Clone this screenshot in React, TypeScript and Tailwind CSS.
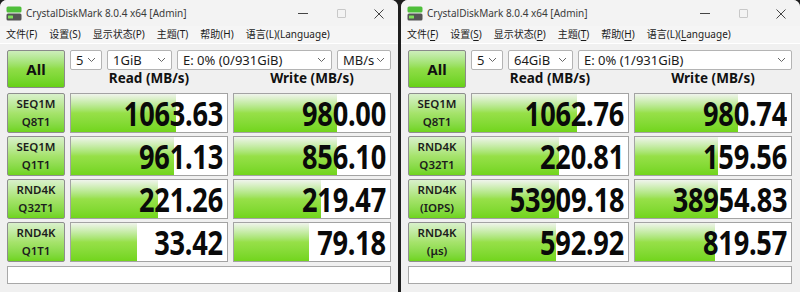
import React from "react";

type Row = { a: string; b: string; read: string; rp: number; write: string; wp: number };

const leftRows: Row[] = [
  { a: "SEQ1M", b: "Q8T1", read: "1063.63", rp: 67, write: "980.00", wp: 66 },
  { a: "SEQ1M", b: "Q1T1", read: "961.13", rp: 66, write: "856.10", wp: 66 },
  { a: "RND4K", b: "Q32T1", read: "221.26", rp: 56, write: "219.47", wp: 56 },
  { a: "RND4K", b: "Q1T1", read: "33.42", rp: 42, write: "79.18", wp: 48 },
];

const rightRows: Row[] = [
  { a: "SEQ1M", b: "Q8T1", read: "1062.76", rp: 67, write: "980.74", wp: 66 },
  { a: "RND4K", b: "Q32T1", read: "220.81", rp: 56, write: "159.56", wp: 53 },
  { a: "RND4K", b: "(IOPS)", read: "53909.18", rp: 56, write: "38954.83", wp: 53 },
  { a: "RND4K", b: "(μs)", read: "592.92", rp: 54, write: "819.57", wp: 51 },
];

const font = { fontFamily: '"Noto Sans", "Noto Sans CJK SC", sans-serif' };

function AppIcon() {
  return (
    <svg width="16" height="15" viewBox="0 0 16 15">
      <rect x="0.5" y="0.5" width="15" height="6" rx="1.5" fill="#4fbf3a" />
      <rect x="0.5" y="7.5" width="15" height="7" rx="1.5" fill="#555" />
      <rect x="2" y="9.5" width="5" height="3" rx="0.5" fill="#7ee05a" />
    </svg>
  );
}

function Chevron() {
  return (
    <svg width="9" height="6" viewBox="0 0 9 6" className="shrink-0">
      <path d="M1 1l3.5 3.5L8 1" fill="none" stroke="#666" strokeWidth="1" />
    </svg>
  );
}

function Select({ text, className }: { text: string; className: string }) {
  return (
    <div
      className={`h-[20px] flex items-center justify-between bg-white border border-[#b4b4b4] rounded-[2px] pl-[5px] pr-[5px] text-[13px] text-[#1b1b1b] ${className}`}
    >
      <span className="leading-none whitespace-nowrap">{text}</span>
      <Chevron />
    </div>
  );
}

function Cell({ value, pct }: { value: string; pct: number }) {
  return (
    <div className="relative h-[40px] border border-[#a3a3a3] bg-white">
      <div
        className="absolute left-0 top-0 bottom-0 bg-gradient-to-b from-[#f0f4ec] via-[#97e048] to-[#72d51b]"
        style={{ width: `${pct}%` }}
      />
      <div className="relative h-full flex items-center justify-end pr-[4px]">
        <span
          className="inline-block origin-right scale-x-[0.8] text-[34px] font-bold leading-[38px] text-[#0a0a0a] tracking-[-0.3px] whitespace-nowrap"
          style={font}
        >
          {value}
        </span>
      </div>
    </div>
  );
}

function Label({ a, b }: { a: string; b: string }) {
  return (
    <div className="h-[40px] border border-[#8e8e8e] rounded-[2px] bg-gradient-to-b from-[#d9f0cb] via-[#a6e36c] to-[#6fd41b] flex flex-col items-center justify-center text-[11.5px] font-semibold text-[#1c1c1c] leading-[18px]">
      <span>{a}</span>
      <span>{b}</span>
    </div>
  );
}

function Menu({ ul }: { ul: boolean }) {
  const items: [string, string, string][] = [
    ["文件(", "F", ")"],
    ["设置(", "S", ")"],
    ["显示状态(", "P", ")"],
    ["主题(", "T", ")"],
    ["帮助(", "H", ")"],
    ["语言(L)(", "L", "anguage)"],
  ];
  return (
    <div className="h-[18px] flex items-center gap-[12px] px-[6px] text-[10px] text-[#1b1b1b] bg-[#f5f5f5] border-b border-white">
      {items.map((it, i) => (
        <span key={i} className="whitespace-nowrap">
          {it[0]}
          <span className={ul ? "underline underline-offset-2" : ""}>{it[1]}</span>
          {it[2]}
        </span>
      ))}
    </div>
  );
}

function Window({
  rows,
  size,
  drive,
  unit,
  ul,
  className,
}: {
  rows: Row[];
  size: string;
  drive: string;
  unit?: string;
  ul: boolean;
  className: string;
}) {
  return (
    <div className={`flex flex-col bg-[#f0f0f0] rounded-t-[7px] ${className}`} style={font}>
      <div className="h-[26px] flex items-center bg-[#f3f3f3] rounded-t-[7px] pl-[6px] pt-[1px]">
        <AppIcon />
        <span className="ml-[4px] text-[10px] text-[#3a3a3a] whitespace-nowrap">CrystalDiskMark 8.0.4 x64 [Admin]</span>
        <div className="ml-auto flex items-center h-full">
          <div className="w-[38px] flex justify-center">
            <div className="w-[10px] h-px bg-[#444]" />
          </div>
          <div className="w-[38px] flex justify-center">
            <div className="w-[9px] h-[9px] border border-[#c8c8c8] rounded-[1px]" />
          </div>
          <div className="w-[38px] flex justify-center">
            <svg width="10" height="10" viewBox="0 0 10 10">
              <path d="M0.5 0.5l9 9M9.5 0.5l-9 9" stroke="#444" strokeWidth="1" />
            </svg>
          </div>
        </div>
      </div>
      <Menu ul={ul} />
      <div className="flex-1 px-[7px] pt-[6px] pb-[6px]">
        <div className="grid grid-cols-[58px_158px_158px] gap-x-[5px]">
          <div className="row-span-2 h-[38px] border border-[#8a8a8a] rounded-[2px] bg-gradient-to-b from-[#cdeebb] via-[#8fdd46] to-[#66d113] flex items-center justify-center text-[15px] font-bold text-[#111]">
            All
          </div>
          <div className="col-span-2 flex gap-[5px]">
            <Select text="5" className="w-[32px]" />
            <Select text={size} className="w-[65px]" />
            <Select text={drive} className="flex-1" />
            {unit && <Select text={unit} className="w-[54px]" />}
          </div>
          <div className="h-[18px] flex items-center justify-center text-[13.5px] font-bold text-[#111] leading-none">
            Read (MB/s)
          </div>
          <div className="h-[18px] flex items-center justify-center text-[13.5px] font-bold text-[#111] leading-none">
            Write (MB/s)
          </div>
        </div>
        <div className="grid grid-cols-[58px_158px_158px] gap-x-[5px] gap-y-[3px] mt-[5px]">
          {rows.map((r, i) => (
            <React.Fragment key={i}>
              <Label a={r.a} b={r.b} />
              <Cell value={r.read} pct={r.rp} />
              <Cell value={r.write} pct={r.wp} />
            </React.Fragment>
          ))}
        </div>
        <div className="mt-[4px] h-[18px] w-[384px] bg-white border border-[#a8a8a8]" />
      </div>
    </div>
  );
}

export default function App() {
  return (
    <div className="w-[800px] h-[292px] bg-[#1e1e1e] flex gap-[3px] overflow-hidden">
      <Window rows={leftRows} size="1GiB" drive="E: 0% (0/931GiB)" unit="MB/s" ul={false} className="w-[398px]" />
      <Window rows={rightRows} size="64GiB" drive="E: 0% (1/931GiB)" ul={true} className="flex-1" />
    </div>
  );
}
